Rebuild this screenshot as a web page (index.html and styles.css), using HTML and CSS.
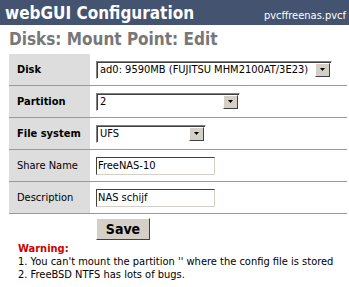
FILE: index.html
```html
<!DOCTYPE html>
<html lang="en">
<head>
  <meta charset="UTF-8" />
  <title>webGUI Configuration</title>
  <link rel="stylesheet" href="styles.css">
</head>
<body>
  <header class="topbar">
    <span class="brand">webGUI Configuration</span>
    <span class="host">pvcffreenas.pvcf</span>
  </header>

  <p class="pgtitle">Disks: Mount Point: Edit</p>

  <!-- Mount point form -->
  <table class="form">
    <tr>
      <td class="label strong">Disk</td>
      <td class="field">
        <div class="select w-disk"><span class="value">ad0: 9590MB (FUJITSU MHM2100AT/3E23)</span><span class="arrow"><svg width="5" height="3" viewBox="0 0 5 3"><path d="M0 0h5L2.5 3z" fill="#000"/></svg></span></div>
      </td>
    </tr>
    <tr>
      <td class="label strong">Partition</td>
      <td class="field">
        <div class="select w-part"><span class="value">2</span><span class="arrow"><svg width="5" height="3" viewBox="0 0 5 3"><path d="M0 0h5L2.5 3z" fill="#000"/></svg></span></div>
      </td>
    </tr>
    <tr>
      <td class="label strong">File system</td>
      <td class="field">
        <div class="select w-fs"><span class="value">UFS</span><span class="arrow"><svg width="5" height="3" viewBox="0 0 5 3"><path d="M0 0h5L2.5 3z" fill="#000"/></svg></span></div>
      </td>
    </tr>
    <tr>
      <td class="label">Share Name</td>
      <td class="field"><div class="input">FreeNAS-10</div></td>
    </tr>
    <tr>
      <td class="label">Description</td>
      <td class="field"><div class="input">NAS schijf</div></td>
    </tr>
    <tr>
      <td class="blank"></td>
      <td class="actions"><button class="save">Save</button></td>
    </tr>
  </table>

  <div class="notes">
    <span class="warn">Warning:</span><br>
    1. You can't mount the partition '' where the config file is stored<br>
    2. FreeBSD NTFS has lots of bugs.
  </div>
</body>
</html>
```

FILE: styles.css
```css
body {
  margin: 0;
  font-family: "DejaVu Sans Condensed", "DejaVu Sans", sans-serif;
  font-size: 11px;
  color: #000;
  background: #fff;
}
/* Top bar */
.topbar {
  display: flex;
  justify-content: space-between;
  align-items: flex-end;
  height: 25px;
  padding: 0 3px 0 5px;
  background: #435370;
  color: #fff;
}
.brand {
  font-size: 17px;
  font-weight: bold;
  line-height: 24px;
}
.host {
  font-size: 11px;
  line-height: 19px;
}
.pgtitle {
  margin: 4px 0 0 9px;
  font-size: 17px;
  font-weight: bold;
  color: #777;
}
/* Form table */
.form {
  border-collapse: collapse;
  margin: 5px 0 0 9px;
  width: 338px;
}
.form td {
  height: 31px;
  padding: 0;
  vertical-align: middle;
}
.label {
  width: 73px;
  padding-left: 8px !important;
  background: #ddd;
  border-bottom: 1px solid #999;
}
.label.strong {
  font-weight: bold;
}
.field {
  padding-left: 6px !important;
  border-bottom: 1px solid #999;
}
.select {
  display: flex;
  align-items: center;
  height: 18px;
  box-sizing: border-box;
  border: 1px solid;
  border-color: #808080 #fff #fff #808080;
  box-shadow: inset 1px 1px 0 #404040;
  background: #fff;
}
.select .value {
  flex: 1;
  padding-left: 3px;
  white-space: nowrap;
  overflow: hidden;
}
.select .arrow {
  display: flex;
  align-items: center;
  justify-content: center;
  width: 15px;
  height: 14px;
  margin-right: 1px;
  box-sizing: border-box;
  background: #d4d0c8;
  border: 1px solid;
  border-color: #fff #404040 #404040 #fff;
}
.w-disk { width: 236px; }
.w-part { width: 144px; }
.w-fs { width: 110px; }
.input {
  width: 119px;
  height: 18px;
  box-sizing: border-box;
  padding: 1px 0 0 1px;
  border: 1px solid;
  border-color: #404040 #d4d0c8 #d4d0c8 #404040;
  box-shadow: 1px 1px 0 #fff inset;
  background: #fff;
  line-height: 14px;
}
.form td.blank,
.form td.actions {
  height: auto;
  border: 0;
}
.form td.actions {
  padding: 4px 0 2px 6px;
  vertical-align: top;
}
.save {
  display: block;
  width: 54px;
  height: 22px;
  padding: 0;
  font-family: "DejaVu Sans Condensed", "DejaVu Sans", sans-serif;
  font-size: 14px;
  font-weight: bold;
  background: #d4d0c8;
  border: 1px solid;
  border-color: #fff #404040 #404040 #fff;
}
/* Notes */
.notes {
  margin: 0 0 0 18px;
  line-height: 13px;
}
.warn {
  color: #c00;
  font-weight: bold;
}
```
